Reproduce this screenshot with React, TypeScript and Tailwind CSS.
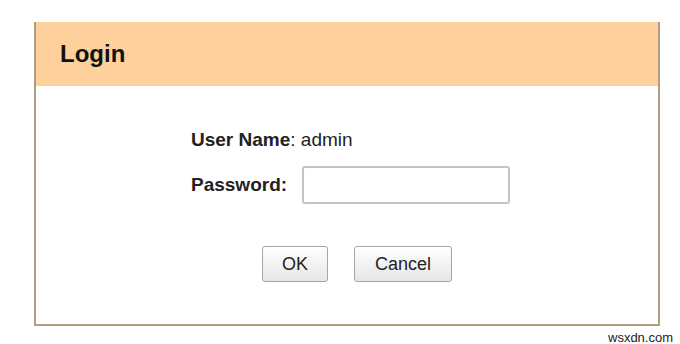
const App = () => {
  return (
    <div className="relative w-[680px] h-[344px] bg-white overflow-hidden font-['Liberation_Sans',Arial,sans-serif]">
      <div className="pt-[22px] pl-[34px]">
        <div className="w-[626px] h-[304px] border-x-2 border-b-2 border-[#b39c80] flex flex-col">
          {/* Header */}
          <div className="h-[64px] bg-[#fed09c] flex items-center pl-[24px]">
            <h1 className="text-[24px] font-bold text-[#111]">Login</h1>
          </div>

          {/* Form */}
          <div className="flex flex-col pl-[155px] pt-[42px] text-[19px] text-[#222]">
            <div className="h-[24px] flex items-center">
              <span className="font-bold">User Name</span>
              <span>: admin</span>
            </div>
            <div className="flex items-center mt-[14px]">
              <span className="w-[111px] font-bold">Password:</span>
              <input
                type="password"
                className="w-[208px] h-[38px] border-2 border-[#c4c4c4] rounded-[3px] bg-white outline-none px-2"
              />
            </div>
            <div className="flex gap-[26px] ml-[71px] mt-[42px]">
              <button className="w-[66px] h-[36px] border border-[#a6a6a6] rounded-[3px] bg-gradient-to-b from-white to-[#e6e6e6] text-[18px] text-[#222]">
                OK
              </button>
              <button className="w-[98px] h-[36px] border border-[#a6a6a6] rounded-[3px] bg-gradient-to-b from-white to-[#e6e6e6] text-[18px] text-[#222]">
                Cancel
              </button>
            </div>
          </div>
        </div>
      </div>
      <span className="absolute left-[608px] top-[331px] text-[13px] leading-[13px] text-[#222]">wsxdn.com</span>
    </div>
  );
};

export default App;
